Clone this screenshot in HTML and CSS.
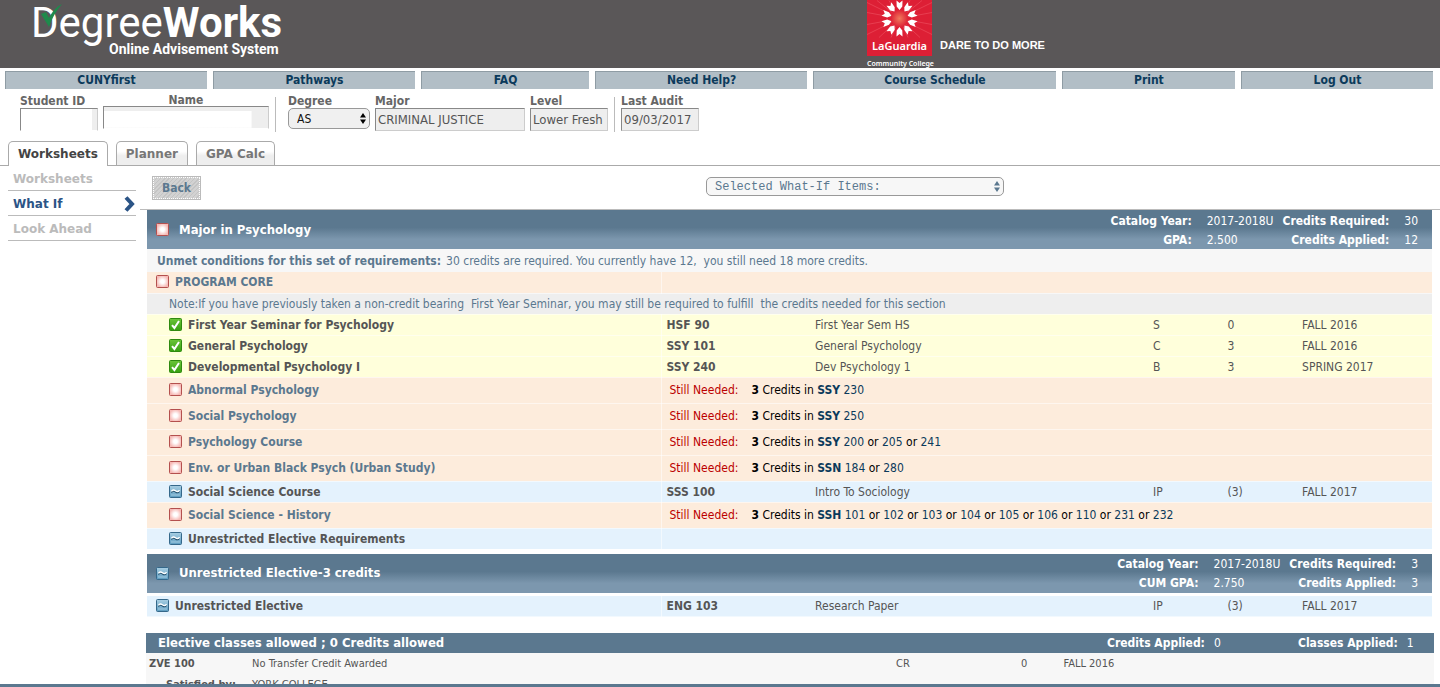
FILE: index.html
```html
<!DOCTYPE html>
<html lang="en">
<head>
<meta charset="utf-8">
<title>DegreeWorks</title>
<link rel="stylesheet" href="styles.css">
</head>
<body>
<svg class="defs" width="0" height="0" aria-hidden="true">
  <defs>
    <radialGradient id="red-glow"><stop offset="0.3" stop-color="#fff"/><stop offset="1" stop-color="#f6b9b5"/></radialGradient>
    <linearGradient id="green-fill" x2="0" y2="1"><stop offset="0" stop-color="#6cc53a"/><stop offset="1" stop-color="#36a011"/></linearGradient>
    <linearGradient id="blue-fill" x2="0" y2="1"><stop offset="0" stop-color="#a9cfe3"/><stop offset="1" stop-color="#5c9cc0"/></linearGradient>
    <radialGradient id="sun"><stop offset="0" stop-color="#f07a5c"/><stop offset="1" stop-color="#dd1f35"/></radialGradient>
    <symbol id="box-open" viewBox="0 0 13 13"><rect x="0.5" y="0.5" width="12" height="12" rx="1" fill="url(#red-glow)" stroke="#b4504e"/></symbol>
    <symbol id="box-done" viewBox="0 0 13 13"><rect x="0.5" y="0.5" width="12" height="12" rx="1" fill="url(#green-fill)" stroke="#2f8a10"/><path d="M3 7.2 5.4 10 10 3" fill="none" stroke="#fff" stroke-width="2"/></symbol>
    <symbol id="box-progress" viewBox="0 0 13 13"><rect x="0.5" y="0.5" width="12" height="12" rx="1" fill="url(#blue-fill)" stroke="#35688a"/><path d="M2.5 7.6C3.5 5.8 5 5.8 6.5 6.9S9.5 8 10.5 6.4" fill="none" stroke="#25506d" stroke-width="1.2"/><path d="M2.5 6.4C3.5 4.6 5 4.6 6.5 5.7S9.5 6.8 10.5 5.2" fill="none" stroke="#fff" stroke-width="1.4"/><path d="M2 10H11" stroke="#a5cbe0"/></symbol>
    <symbol id="arrows" viewBox="0 0 6 11"><path d="M3 0 6 4.5H0ZM3 11 0 6.5H6Z" fill="currentColor"/></symbol>
  </defs>
</svg>

<header class="banner">
  <div class="brand">
    <svg class="brand-tick" viewBox="0 0 22 24" aria-hidden="true"><path d="M0 10 5 8 8 14C11 8 15 3 21 0 15 7 11 14 8 23Z" fill="#1f8a4c"/></svg>
    <div class="brand-name">Degree<b>Works</b></div>
    <div class="brand-sub">Online Advisement System</div>
  </div>
  <div class="college">
    <div class="college-mark">
      <div class="college-square">
        <svg class="burst" viewBox="0 0 65 37" aria-hidden="true">
          <g stroke="#ef5362" stroke-width="0.6"><path d="M32.5 18 0 2M32.5 18 0 12M32.5 18 0 24M32.5 18 0 34M32.5 18 12 37M32.5 18 24 37M32.5 18 41 37M32.5 18 53 37M32.5 18 65 34M32.5 18 65 24M32.5 18 65 12M32.5 18 65 2M32.5 18 10 0M32.5 18 22 0M32.5 18 43 0M32.5 18 55 0"/></g>
          <circle cx="32.5" cy="18" r="9" fill="url(#sun)"/>
          <g transform="translate(32.5 18)">
            <g id="petals"><path id="petal" d="M-3 -18 0 -15.5 3 -18 2.8 -12 0 -8.5 -2.8 -12Z" fill="#fff"/><use href="#petal" transform="rotate(36)"/><use href="#petal" transform="rotate(72)"/><use href="#petal" transform="rotate(108)"/><use href="#petal" transform="rotate(144)"/></g>
            <use href="#petals" transform="rotate(180)"/>
          </g>
        </svg>
        <span>LaGuardia</span>
      </div>
      <div class="college-sub">Community College</div>
    </div>
    <strong class="motto">DARE TO DO MORE</strong>
  </div>
</header>

<nav class="topnav">
  <a class="w202" href="#">CUNYfirst</a>
  <a class="w202" href="#">Pathways</a>
  <a class="w168" href="#">FAQ</a>
  <a class="w212" href="#">Need Help?</a>
  <a class="w243" href="#">Course Schedule</a>
  <a class="w173" href="#">Print</a>
  <a class="w192" href="#">Log Out</a>
</nav>

<form class="student">
  <div class="field id"><label for="sid">Student ID</label><input id="sid" type="text" class="masked"></div>
  <div class="field name"><label for="sname">Name</label><input id="sname" type="text" class="masked"></div>
  <div class="rule"></div>
  <div class="field degree"><label for="degree">Degree</label>
    <div class="picker"><select id="degree"><option>AS</option></select><svg aria-hidden="true"><use href="#arrows"/></svg></div></div>
  <div class="field major"><label for="major">Major</label><input id="major" type="text" value="CRIMINAL JUSTICE" readonly></div>
  <div class="field level"><label for="level">Level</label><input id="level" type="text" value="Lower Fresh" readonly></div>
  <div class="rule"></div>
  <div class="field audit"><label for="audit">Last Audit</label><input id="audit" type="text" value="09/03/2017" readonly></div>
</form>

<nav class="tabs">
  <a class="tab current" href="#">Worksheets</a>
  <a class="tab" href="#">Planner</a>
  <a class="tab" href="#">GPA Calc</a>
</nav>

<div class="body">
  <nav class="side">
    <a href="#">Worksheets</a>
    <a class="on" href="#">What If<svg viewBox="0 0 11 16" aria-hidden="true"><path d="M2 1.5 8 8 2 14.5" fill="none" stroke="#2b5486" stroke-width="4"/></svg></a>
    <a href="#">Look Ahead</a>
  </nav>
  <main class="content">
    <div class="tools">
      <button type="button" class="back">Back</button>
      <div class="picker whatif"><select aria-label="Selected What-If Items"><option>Selected What-If Items:</option></select><svg aria-hidden="true"><use href="#arrows"/></svg></div>
    </div>

    <section class="block">
      <header class="block-head">
        <svg class="box"><use href="#box-open"/></svg>
        <h2>Major in Psychology</h2>
        <dl class="facts">
          <dt>Catalog Year:</dt><dd>2017-2018U</dd><dt>Credits Required:</dt><dd>30</dd>
          <dt>GPA:</dt><dd>2.500</dd><dt>Credits Applied:</dt><dd>12</dd>
        </dl>
      </header>
      <p class="unmet"><b>Unmet conditions for this set of requirements:</b><span>30 credits are required. You currently have 12,&nbsp; you still need 18 more credits.</span></p>
      <table class="reqs">
        <colgroup><col class="c-label"><col class="c-code"><col class="c-title"><col class="c-grade"><col class="c-cred"><col class="c-term"></colgroup>
        <tbody>
        <tr class="open first"><th class="outer"><svg class="box"><use href="#box-open"/></svg>PROGRAM CORE</th><td colspan="5"></td></tr>
        <tr class="note"><td colspan="6">Note:If you have previously taken a non-credit bearing&nbsp; First Year Seminar, you may still be required to fulfill&nbsp; the credits needed for this section</td></tr>
        <tr class="done"><th><svg class="box"><use href="#box-done"/></svg>First Year Seminar for Psychology</th><td><b>HSF 90</b></td><td>First Year Sem HS</td><td>S</td><td>0</td><td>FALL 2016</td></tr>
        <tr class="done"><th><svg class="box"><use href="#box-done"/></svg>General Psychology</th><td><b>SSY 101</b></td><td>General Psychology</td><td>C</td><td>3</td><td>FALL 2016</td></tr>
        <tr class="done"><th><svg class="box"><use href="#box-done"/></svg>Developmental Psychology I</th><td><b>SSY 240</b></td><td>Dev Psychology 1</td><td>B</td><td>3</td><td>SPRING 2017</td></tr>
        <tr class="open"><th><svg class="box"><use href="#box-open"/></svg>Abnormal Psychology</th><td colspan="5"><div class="need"><span>Still Needed:</span><p><b>3</b> Credits in <a href="#"><b>SSY</b> 230</a></p></div></td></tr>
        <tr class="open"><th><svg class="box"><use href="#box-open"/></svg>Social Psychology</th><td colspan="5"><div class="need"><span>Still Needed:</span><p><b>3</b> Credits in <a href="#"><b>SSY</b> 250</a></p></div></td></tr>
        <tr class="open"><th><svg class="box"><use href="#box-open"/></svg>Psychology Course</th><td colspan="5"><div class="need"><span>Still Needed:</span><p><b>3</b> Credits in <a href="#"><b>SSY</b> 200</a> or <a href="#">205</a> or <a href="#">241</a></p></div></td></tr>
        <tr class="open"><th><svg class="box"><use href="#box-open"/></svg>Env. or Urban Black Psych (Urban Study)</th><td colspan="5"><div class="need"><span>Still Needed:</span><p><b>3</b> Credits in <a href="#"><b>SSN</b> 184</a> or <a href="#">280</a></p></div></td></tr>
        <tr class="progress"><th><svg class="box"><use href="#box-progress"/></svg>Social Science Course</th><td><b>SSS 100</b></td><td>Intro To Sociology</td><td>IP</td><td>(3)</td><td>FALL 2017</td></tr>
        <tr class="open"><th><svg class="box"><use href="#box-open"/></svg>Social Science - History</th><td colspan="5"><div class="need"><span>Still Needed:</span><p><b>3</b> Credits in <a href="#"><b>SSH</b> 101</a> or <a href="#">102</a> or <a href="#">103</a> or <a href="#">104</a> or <a href="#">105</a> or <a href="#">106</a> or <a href="#">110</a> or <a href="#">231</a> or <a href="#">232</a></p></div></td></tr>
        <tr class="progress"><th><svg class="box"><use href="#box-progress"/></svg>Unrestricted Elective Requirements</th><td colspan="5"></td></tr>
        </tbody>
      </table>
    </section>

    <section class="block second">
      <header class="block-head">
        <svg class="box"><use href="#box-progress"/></svg>
        <h2>Unrestricted Elective-3 credits</h2>
        <dl class="facts">
          <dt>Catalog Year:</dt><dd>2017-2018U</dd><dt>Credits Required:</dt><dd>3</dd>
          <dt>CUM GPA:</dt><dd>2.750</dd><dt>Credits Applied:</dt><dd>3</dd>
        </dl>
      </header>
      <table class="reqs">
        <colgroup><col class="c-label"><col class="c-code"><col class="c-title"><col class="c-grade"><col class="c-cred"><col class="c-term"></colgroup>
        <tbody>
        <tr class="progress"><th class="outer"><svg class="box"><use href="#box-progress"/></svg>Unrestricted Elective</th><td><b>ENG 103</b></td><td>Research Paper</td><td>IP</td><td>(3)</td><td>FALL 2017</td></tr>
        </tbody>
      </table>
    </section>

    <section class="electives">
      <header class="elect-head">
        <h2>Elective classes allowed ; 0 Credits allowed</h2>
        <dl><dt>Credits Applied:</dt><dd>0</dd></dl>
        <dl><dt>Classes Applied:</dt><dd>1</dd></dl>
      </header>
      <table class="classes">
        <colgroup><col class="e-code"><col class="e-title"><col class="e-grade"><col class="e-cred"><col></colgroup>
        <tbody>
        <tr><th>ZVE 100</th><td>No Transfer Credit Awarded</td><td>CR</td><td>0</td><td>FALL 2016</td></tr>
        <tr><th class="by">Satisfied by:</th><td colspan="4">YORK COLLEGE</td></tr>
        </tbody>
      </table>
    </section>
  </main>
</div>
<footer class="foot"></footer>
</body>
</html>
```
FILE: styles.css
```css
* { box-sizing: border-box; }
body {
  margin: 0; height: 100vh; overflow: hidden;
  display: flex; flex-direction: column;
  background: #fff; color: #555;
  font: 12px/20px "DejaVu Sans Condensed", "DejaVu Sans", sans-serif;
}
a { color: inherit; text-decoration: none; }
h2, p, dl, dd { margin: 0; }
.defs { position: absolute; }
.box { width: 13px; height: 13px; flex: none; }

/* banner */
.banner { height: 68px; flex: none; display: flex; background: #5a5758; color: #fff; }
.brand {
  position: relative; width: 60%; padding-left: 31px;
  font-family: Roboto, "Liberation Sans", sans-serif;
}
.brand-name { font-size: 42px; line-height: 46px; font-weight: 400; }
.brand-name b { font-weight: 700; }
.brand-sub { font-size: 14px; line-height: 16px; font-weight: bold; margin-top: -5px; padding-left: 78px; }
.brand-tick { position: absolute; left: 41px; top: 4px; width: 22px; height: 24px; }
.college { display: flex; align-items: flex-start; gap: 8px; padding-left: 3px; }
.college-mark { width: 65px; text-align: center; font-family: "Noto Sans", sans-serif; }
.college-square { height: 56px; background: #dd1f35; display: flex; flex-direction: column; font-size: 11px; line-height: 16px; font-weight: 600; }
.burst { width: 65px; height: 38px; flex: none; }
.college-sub { font-size: 7px; line-height: 16px; font-weight: 600; white-space: nowrap; }
.motto { font: bold 11px/16px "Liberation Sans", sans-serif; padding-top: 37px; }

/* top navigation */
.topnav { flex: none; display: flex; gap: 6px; padding: 3px 7px 0 5px; }
.topnav a {
  flex-basis: 0; height: 18px; line-height: 16px; text-align: center;
  font-weight: bold; color: #0b3a5b; background: #b2bec6;
  border-top: 1px solid #8f9ca4; border-left: 1px solid #8f9ca4;
}
.w202 { flex-grow: 202; } .w168 { flex-grow: 168; } .w212 { flex-grow: 212; }
.w243 { flex-grow: 243; } .w173 { flex-grow: 173; } .w192 { flex-grow: 192; }

/* student bar */
.student { flex: none; display: flex; padding: 5px 0 0 20px; height: 52px; }
.field { display: flex; flex-direction: column; margin-right: 5px; }
.field label { font-weight: bold; line-height: 14px; color: #666; }
.student input {
  width: 100%; height: 23px; padding: 0 2px; border-radius: 0;
  font: 13px "DejaVu Sans Condensed", sans-serif; color: #555; background: #eee;
  border: 1px solid #ccc; border-top-color: #888; border-left-color: #888;
}
.student .masked { background: linear-gradient(#fff, #fff) 0 100% / 94% 100% no-repeat #eee; border-bottom-color: #fff; }
.student .name .masked { background-size: 90% 80%; }
.id { width: 78px; } .name { width: 166px; margin-right: 6px; }
.name label { text-align: center; line-height: 12px; }
.degree { width: 82px; } .major { width: 150px; } .level { width: 78px; margin-right: 6px; } .audit { width: 78px; }
.rule { width: 1px; height: 35px; background: #bbb; margin: 3px 12px 0 0; }
.level + .rule { margin-right: 6px; }
.picker { position: relative; }
.picker select {
  appearance: none; width: 100%; height: 21px; margin: 0; padding: 0 8px; display: block;
  font: 12px "DejaVu Sans Condensed", sans-serif; color: #111;
  background: #f0f0f0; border: 1px solid #999; border-radius: 5px;
}
.picker svg { position: absolute; right: 4px; top: 5px; width: 6px; height: 11px; color: #000; pointer-events: none; }

/* tabs */
.tabs { flex: none; display: flex; gap: 8px; padding-left: 8px; border-bottom: 1px solid #aaa; }
.tab {
  height: 24px; padding: 0 9px; line-height: 24px;
  font-family: "DejaVu Sans", sans-serif; font-size: 12px; font-weight: bold; color: #777;
  border: 1px solid #aaa; border-bottom: 0; border-radius: 5px 5px 0 0;
  background: linear-gradient(#fff 40%, #eee 60%);
}
.tab.current { color: #444; background: #fff; margin-bottom: -1px; height: 25px; }

/* body */
.body { flex: 1; min-height: 0; overflow: hidden; display: flex; }
.side { width: 128px; flex: none; margin: 0 4px 0 8px; }
.side a {
  display: flex; justify-content: space-between; align-items: center;
  height: 25px; padding: 1px 0 0 5px; border-bottom: 1px solid #bbb;
  font-family: "DejaVu Sans", sans-serif; font-size: 12px; font-weight: bold; color: #bbb;
}
.side .on { color: #2b5486; }
.side svg { width: 11px; height: 16px; margin-right: 1px; }
.content { flex: 1; min-width: 0; }
.tools { position: relative; height: 44px; padding: 10px 0 0 12px; border-bottom: 1px solid #bbb; }
.back {
  width: 49px; height: 24px; padding: 0; border: 1px solid #bbb; outline: 1px dotted #fff; outline-offset: -2px;
  background: repeating-linear-gradient(135deg, #c4c4c4 0 1px, #d2d2d2 1px 3px);
  font: bold 12px "DejaVu Sans Condensed", sans-serif; color: #5b788f;
}
.whatif { position: absolute; left: 566px; top: 11px; width: 298px; }
.whatif select { height: 19px; background: #f7f7f7; color: #5b788f; font: 12px "Liberation Mono", monospace; }
.whatif svg { color: #5b788f; top: 4px; }

/* requirement blocks */
.block { margin: 0 8px 0 7px; }
.block.second { margin-top: 4px; }
.block-head {
  display: flex; align-items: center; height: 39px; padding: 0 14px 0 9px; color: #fff;
  background: linear-gradient(#5b788f 45%, #7c97ae 75%, #7c97ae);
}
.block-head h2, .elect-head h2 { font-size: 13px; line-height: 20px; padding-left: 10px; flex: 1; }
.facts { display: grid; grid-template-columns: repeat(4, auto); line-height: 19px; padding-top: 2px; }
.facts dt { font-weight: bold; text-align: right; }
.facts dd { padding: 0 9px 0 15px; }
.facts dd:nth-of-type(even) { padding-right: 0; }
.unmet { padding: 1px 10px; height: 23px; background: #f7f7f7; color: #5b788f; line-height: 22px; }
.unmet span { padding-left: 5px; }

.reqs { width: 100%; table-layout: fixed; border-collapse: collapse; }
.c-label { width: 40%; } .c-code { width: 11.6%; } .c-title { width: 26.3%; }
.c-grade { width: 5.8%; } .c-cred { width: 5.8%; }
.reqs th, .reqs td { height: 21px; padding: 0 5px; text-align: left; line-height: 18px; white-space: nowrap; border-bottom: 1px solid #fff8; }
.reqs th { padding-left: 22px; border-right: 1px solid #fff8; }
.reqs th.outer { padding-left: 9px; }
.reqs th .box { vertical-align: middle; margin: -2px 6px 0 0; }
.reqs .open { background: #fdecdc; }
.reqs .open th { color: #5b788f; }
.reqs .open th, .reqs .open td { height: 26px; }
.reqs .first th, .reqs .first td { height: 21px; }
.reqs .note { background: #eee; color: #5b788f; }
.reqs .note td { padding-left: 22px; }
.reqs .done { background: #ffffdb; }
.reqs .progress { background: #e4f2fd; }
.second .block-head { margin-bottom: 3px; }
.need { display: flex; padding-left: 3px; color: #000; }
.need span { width: 82px; color: #b00; }
.need a { color: #0b3a5b; }

/* electives */
.electives { margin: 16px 6px 0; background: #f7f7f7; }
.elect-head { display: flex; align-items: center; height: 20px; padding-left: 2px; background: #5b788f; color: #fff; }
.elect-head dl { display: flex; gap: 9px; width: 191px; }
.elect-head dl + dl { width: 136px; }
.elect-head dt { font-weight: bold; }
.classes { width: 100%; table-layout: fixed; border-collapse: collapse; font-size: 11px; }
.classes th, .classes td { height: 21px; padding: 0 3px; text-align: left; line-height: 20px; }
.classes .by { padding-left: 20px; }
.e-code { width: 8%; } .e-title { width: 50%; } .e-grade { width: 9.7%; } .e-cred { width: 3.3%; }
.foot { flex: none; height: 3px; background: #5b788f; }
```
